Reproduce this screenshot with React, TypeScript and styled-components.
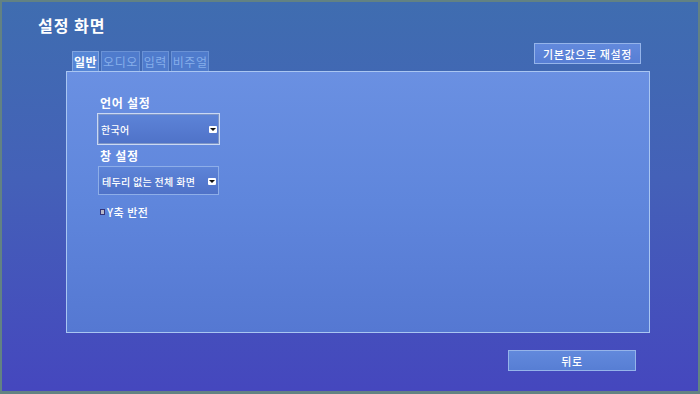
import React from 'react';
import styled, { createGlobalStyle } from 'styled-components';

const GlobalStyle = createGlobalStyle`
  html, body {
    margin: 0;
    padding: 0;
    background: #5f7f80;
  }
  * {
    box-sizing: border-box;
  }
`;

const Frame = styled.div`
  width: 700px;
  height: 394px;
  border: 2px solid #628283;
  border-bottom-width: 3px;
  background: linear-gradient(180deg, #3f6db0 0%, #4461b8 45%, #4547be 100%);
  display: flex;
  flex-direction: column;
  font-family: 'Noto Sans CJK KR', 'Noto Sans', sans-serif;
  color: #ffffff;
  position: relative;
  overflow: hidden;
`;

const Title = styled.h1`
  margin: 12px 0 0 36px;
  font-size: 16px;
  line-height: 22px;
  font-weight: 700;
  letter-spacing: 1px;
`;

const Body = styled.div`
  margin: 7px 48px 0 64px;
  display: flex;
  flex-direction: column;
`;

const TopRow = styled.div`
  display: flex;
  align-items: flex-end;
  justify-content: space-between;
`;

const Tabs = styled.div`
  display: flex;
  gap: 2px;
  margin-left: 6px;
`;

const Tab = styled.button<{ $active?: boolean }>`
  font-family: inherit;
  font-size: 12px;
  line-height: 18px;
  height: 20px;
  padding: 0 1px;
  border: 1px solid ${(p) => (p.$active ? '#7fa4e0' : '#6a92d6')};
  border-bottom: none;
  background: ${(p) => (p.$active ? '#5686d6' : '#4f7bcc')};
  color: ${(p) => (p.$active ? '#ffffff' : '#86aeea')};
  font-weight: ${(p) => (p.$active ? 600 : 400)};
  letter-spacing: 0.5px;
`;

const OutlineButton = styled.button<{ $wide?: number }>`
  font-family: inherit;
  font-size: 11px;
  font-weight: 500;
  color: #ffffff;
  height: 21px;
  width: ${(p) => p.$wide ?? 106}px;
  border: 1px solid #95b4ea;
  background: linear-gradient(180deg, #6289dc 0%, #577ed4 100%);
  letter-spacing: 0.6px;
  padding: 0;
`;

const ResetButton = styled(OutlineButton)`
  margin: 0 9px 7px 0;
`;

const Panel = styled.div`
  height: 262px;
  border: 1px solid #a9c6f2;
  background: linear-gradient(180deg, #6a90e2 0%, #5f86dc 50%, #5578d2 100%);
  padding: 23px 0 0 33px;
  display: flex;
  flex-direction: column;
  align-items: flex-start;
`;

const Label = styled.div`
  font-size: 12px;
  line-height: 16px;
  font-weight: 700;
  letter-spacing: 0.7px;
  margin-bottom: 2px;
`;

const Select = styled.div<{ $focused?: boolean }>`
  width: ${(p) => (p.$focused ? 123 : 121)}px;
  height: ${(p) => (p.$focused ? 32 : 29)}px;
  margin-left: ${(p) => (p.$focused ? -3 : -2)}px;
  margin-bottom: 3px;
  border: 1px solid ${(p) => (p.$focused ? '#c9d8f4' : '#8eaee8')};
  box-shadow: ${(p) => (p.$focused ? 'inset 0 0 0 1px #7f97c8' : 'none')};
  background: linear-gradient(180deg, #5d84d8 0%, #4f72c8 100%);
  display: flex;
  align-items: center;
  justify-content: space-between;
  padding: 1px 2px 0 3px;
  font-size: 10px;
  font-weight: 500;
  letter-spacing: 0.3px;
`;

const Arrow = styled.span`
  width: 8px;
  height: 7px;
  background: #ffffff;
  border-radius: 1px;
  position: relative;
  &::after {
    content: '';
    position: absolute;
    left: 1px;
    top: 2px;
    border-left: 3px solid transparent;
    border-right: 3px solid transparent;
    border-top: 3px solid #111;
  }
`;

const CheckRow = styled.label`
  display: flex;
  align-items: center;
  gap: 2px;
  margin-top: 6px;
  font-size: 11px;
  font-weight: 500;
  letter-spacing: 0.5px;
`;

const Box = styled.span`
  width: 5px;
  height: 6px;
  background: #b8b8c8;
  border: 1px solid #34347a;
`;

const Footer = styled.div`
  display: flex;
  justify-content: flex-end;
  margin-top: 17px;
`;

const BackButton = styled(OutlineButton)`
  margin-right: 14px;
`;

export default function App() {
  return (
    <>
      <GlobalStyle />
      <Frame>
        <Title>설정 화면</Title>
        <Body>
          <TopRow>
            <Tabs>
              <Tab $active>일반</Tab>
              <Tab>오디오</Tab>
              <Tab>입력</Tab>
              <Tab>비주얼</Tab>
            </Tabs>
            <ResetButton $wide={107}>기본값으로 재설정</ResetButton>
          </TopRow>
          <Panel>
            <Label>언어 설정</Label>
            <Select $focused>
              한국어
              <Arrow />
            </Select>
            <Label>창 설정</Label>
            <Select>
              테두리 없는 전체 화면
              <Arrow />
            </Select>
            <CheckRow>
              <Box />
              Y축 반전
            </CheckRow>
          </Panel>
          <Footer>
            <BackButton $wide={128}>뒤로</BackButton>
          </Footer>
        </Body>
      </Frame>
    </>
  );
}
